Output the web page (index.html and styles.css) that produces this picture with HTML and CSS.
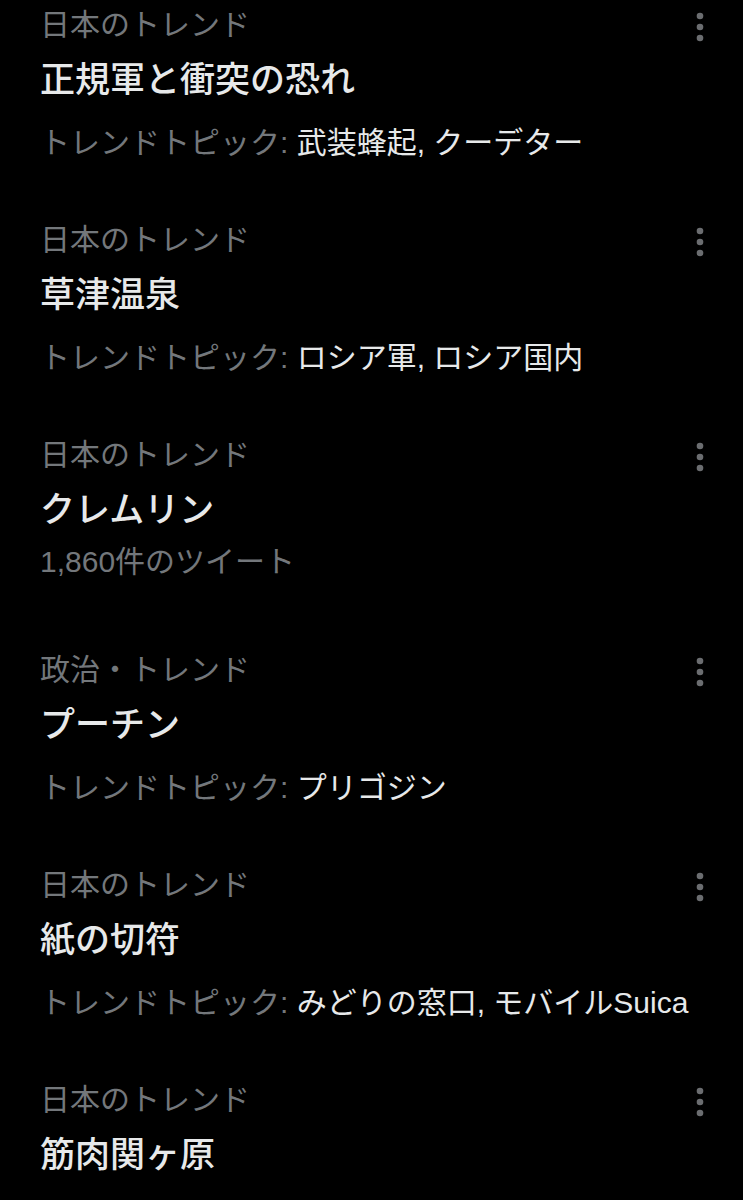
FILE: index.html
```html
<!DOCTYPE html>
<html lang="ja">
<head>
<meta charset="utf-8">
<title>トレンド</title>
<link rel="stylesheet" href="styles.css">
</head>
<body>
<ul class="trends">
  <li class="trend">
    <div class="trend-head"><span class="category">日本のトレンド</span><svg class="more" viewBox="0 0 8 30" width="8" height="30"><circle cx="4" cy="4" r="3.3"/><circle cx="4" cy="15" r="3.3"/><circle cx="4" cy="26" r="3.3"/></svg></div>
    <div class="title">正規軍と衝突の恐れ</div>
    <div class="meta"><span class="label">トレンドトピック:</span> 武装蜂起, クーデター</div>
  </li>
  <li class="trend">
    <div class="trend-head"><span class="category">日本のトレンド</span><svg class="more" viewBox="0 0 8 30" width="8" height="30"><circle cx="4" cy="4" r="3.3"/><circle cx="4" cy="15" r="3.3"/><circle cx="4" cy="26" r="3.3"/></svg></div>
    <div class="title">草津温泉</div>
    <div class="meta"><span class="label">トレンドトピック:</span> ロシア軍, ロシア国内</div>
  </li>
  <li class="trend">
    <div class="trend-head"><span class="category">日本のトレンド</span><svg class="more" viewBox="0 0 8 30" width="8" height="30"><circle cx="4" cy="4" r="3.3"/><circle cx="4" cy="15" r="3.3"/><circle cx="4" cy="26" r="3.3"/></svg></div>
    <div class="title">クレムリン</div>
    <div class="meta count">1,860件のツイート</div>
  </li>
  <li class="trend">
    <div class="trend-head"><span class="category">政治・トレンド</span><svg class="more" viewBox="0 0 8 30" width="8" height="30"><circle cx="4" cy="4" r="3.3"/><circle cx="4" cy="15" r="3.3"/><circle cx="4" cy="26" r="3.3"/></svg></div>
    <div class="title">プーチン</div>
    <div class="meta"><span class="label">トレンドトピック:</span> プリゴジン</div>
  </li>
  <li class="trend">
    <div class="trend-head"><span class="category">日本のトレンド</span><svg class="more" viewBox="0 0 8 30" width="8" height="30"><circle cx="4" cy="4" r="3.3"/><circle cx="4" cy="15" r="3.3"/><circle cx="4" cy="26" r="3.3"/></svg></div>
    <div class="title">紙の切符</div>
    <div class="meta"><span class="label">トレンドトピック:</span> みどりの窓口, モバイルSuica</div>
  </li>
  <li class="trend">
    <div class="trend-head"><span class="category">日本のトレンド</span><svg class="more" viewBox="0 0 8 30" width="8" height="30"><circle cx="4" cy="4" r="3.3"/><circle cx="4" cy="15" r="3.3"/><circle cx="4" cy="26" r="3.3"/></svg></div>
    <div class="title">筋肉関ヶ原</div>
  </li>
</ul>
</body>
</html>
```

FILE: styles.css
```css
html, body {
  margin: 0;
  padding: 0;
  background: #000;
}

body {
  font-family: "Liberation Sans", "Noto Sans CJK JP", sans-serif;
  color: #e7e9ea;
}

.trends {
  list-style: none;
  margin: 0;
  padding: 0;
}

.trend {
  height: 215px;
  box-sizing: border-box;
  padding: 0 39px 0 40px;
  display: flex;
  flex-direction: column;
}

.trend:last-child {
  height: auto;
  padding-bottom: 15px;
}

.trend-head {
  display: flex;
  justify-content: space-between;
  align-items: flex-start;
  height: 50px;
}

.category {
  font-size: 30px;
  line-height: 50px;
  color: #73777b;
}

.more {
  fill: #6b6d70;
  margin-top: 12px;
}

.title {
  font-size: 35px;
  line-height: 60px;
  font-weight: 500;
  color: #e7e9ea;
}

.meta {
  font-size: 30px;
  line-height: 66px;
  color: #e7e9ea;
  white-space: nowrap;
}

.meta .label {
  color: #73777b;
}

.meta.count {
  line-height: 44px;
  color: #73777b;
}
```
